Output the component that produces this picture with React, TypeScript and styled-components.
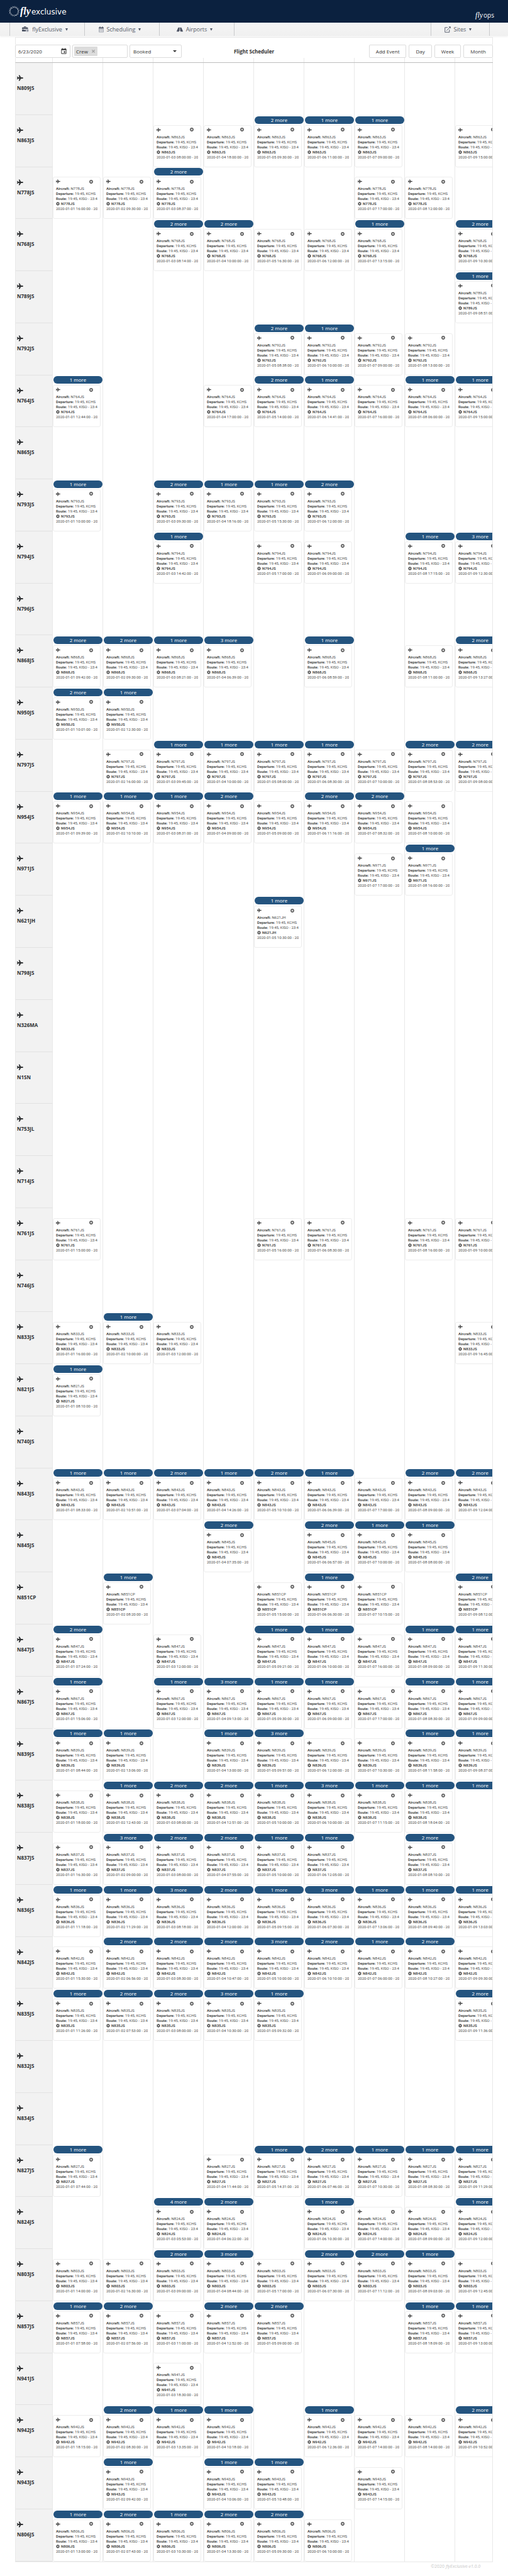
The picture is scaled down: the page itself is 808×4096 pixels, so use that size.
import React from "react";
import styled, { createGlobalStyle, css } from "styled-components";
import { FaCog, FaPlane, FaPlusCircle, FaRoad, FaTimes } from "react-icons/fa";
import { MdEvent } from "react-icons/md";

/* One line per aircraft: "day time" entries, "+n" for hidden events, "-" when no card is shown. */
const FLEET: [string, string][] = [
  ["N809JS", ""],
  ["N863JS", "3 08:00,4 18:00,5 09:30 +2,6 11:00 +1,7 09:00 +1,9 15:00"],
  ["N778JS", "1 16:00,2 09:30,3 08:37 +2,7 17:00,8 12:00"],
  ["N768JS", "3 08:14 +2,4 10:00 +2,5 16:30,6 12:00,7 13:15 +1,9 10:30 +2"],
  ["N789JS", "9 08:51 +1"],
  ["N792JS", "5 08:38 +2,6 10:00 +1,7 09:00,8 13:00"],
  ["N764JS", "1 12:44 +1,4 17:00,5 14:00 +2,6 14:41 +1,7 16:00,8 06:00 +1,9 15:00 +1"],
  ["N865JS", ""],
  ["N793JS", "1 10:00 +1,3 09:30 +2,4 18:16 +1,5 15:30 +1,6 12:00 +2"],
  ["N794JS", "3 14:42 +1,5 17:00,6 09:00,8 17:15 +1,9 12:30 +3"],
  ["N796JS", ""],
  ["N868JS", "1 09:42 +2,2 09:30 +2,3 08:21 +1,4 06:39 +3,6 08:59 +1,8 11:00,9 13:27 +2"],
  ["N950JS", "1 10:01 +2,2 12:30 +1"],
  ["N797JS", "2 16:00,3 09:45 +1,4 10:00 +1,5 08:00 +1,6 08:30 +1,7 10:00,8 08:53 +2,9 08:00 +2"],
  ["N954JS", "1 09:39 +1,2 10:10 +1,3 08:31 +1,4 09:00 +2,5 09:00,6 11:16 +2,7 08:32 +2,8 10:00"],
  ["N971JS", "7 17:00,8 16:00 +1"],
  ["N621JH", "5 10:30 +1"],
  ["N798JS", ""],
  ["N326MA", ""],
  ["N1SN", ""],
  ["N753JL", ""],
  ["N714JS", ""],
  ["N761JS", "1 15:00,5 16:00,6 08:30,8 16:00,9 10:00"],
  ["N746JS", ""],
  ["N833JS", "1 16:00,2 10:00 +1,3 12:00,9 16:45"],
  ["N821JS", "1 08:10 +1"],
  ["N740JS", ""],
  ["N843JS", "1 08:33 +1,2 10:51 +1,3 07:04 +2,4 14:26 +1,5 10:10 +2,6 06:39 +1,7 17:00,8 09:00 +2,9 12:04 +2"],
  ["N845JS", "4 07:35 +2,6 06:57 +2,7 10:00 +1,8 08:00 +1"],
  ["N851CP", "2 08:20 +1,5 15:00,6 06:30 +1,7 10:15,9 08:12 +2"],
  ["N847JS", "1 07:24 +2,3 12:00,5 09:21 +1,6 10:00 +1,7 16:00,8 09:00 +1,9 11:30 +1"],
  ["N867JS", "1 15:06 +1,3 12:00 +1,4 09:13 +3,5 09:30 +1,6 09:00 +1,7 17:00,8 08:30 +1,9 09:00 +1"],
  ["N839JS", "1 08:44 +1,2 13:06 +1,4 13:00 +1,5 09:51 +3,6 12:00,7 10:30,8 11:58 +1,9 08:37 +1"],
  ["N838JS", "1 18:00,2 12:43 +1,3 08:00 +2,4 12:51 +2,5 10:00 +1,6 10:00 +3,7 11:15 +1,8 18:04 +1,9 - +1"],
  ["N837JS", "1 16:30,2 09:00 +3,3 08:00 +2,4 07:55 +2,5 10:00 +1,6 12:05 +1,8 08:10 +2"],
  ["N836JS", "1 11:18 +1,2 11:29 +1,3 08:18 +3,4 12:00 +2,5 09:15 +1,6 07:30 +3,7 13:06 +1,8 09:40 +1,9 13:03 +1"],
  ["N842JS", "1 15:30,2 06:56 +2,3 08:30 +2,4 10:47 +2,5 10:00 +3,6 10:10 +2,7 06:00 +1,8 10:27 +2,9 09:30"],
  ["N835JS", "1 11:26 +1,2 07:53 +2,3 08:00 +2,4 10:30 +3,5 09:32 +1,9 11:36 +2"],
  ["N832JS", ""],
  ["N834JS", ""],
  ["N827JS", "1 07:44 +1,4 11:44,5 14:31 +1,6 07:46 +2,7 10:30 +1,8 08:30 +1,9 11:29 +1"],
  ["N824JS", "3 05:53 +4,4 06:22 +2,6 10:30 +1,7 14:00,8 09:00,9 12:00 +1"],
  ["N803JS", "1 14:00,2 16:30,3 09:00 +2,4 08:44 +3,5 17:00,6 07:30 +2,7 11:12 +2,8 09:03 +1,9 12:45"],
  ["N857JS", "1 07:58 +1,2 07:56 +2,3 11:00,4 12:52 +2,5 09:00 +2,8 18:09 +1,9 13:00 +1"],
  ["N941JS", "3 18:30"],
  ["N942JS", "1 18:15,2 08:30 +2,3 13:35 +1,4 10:18 +1,6 12:36 +1,7 14:00,8 14:00,9 10:52 +2"],
  ["N943JS", "2 09:42 +1,4 10:06 +1,5 10:48 +1,7 14:15"],
  ["N806JS", "1 13:00 +1,2 07:43 +2,3 10:30 +1,4 13:30 +2,5 09:30 +2,6 10:00"],
];

const DAYS = [1, 2, 3, 4, 5, 6, 7, 8, 9];
const LINE = "#e9e9e9";

const GlobalStyle = createGlobalStyle`
  *, *::before, *::after { box-sizing: border-box; }
  body { margin: 0; background: #fff; }
  body, button, input, select { font-family: "Open Sans", "Noto Sans", sans-serif; }
  button, input, select { margin: 0; padding: 0; border: 0; background: none; color: inherit; font-size: inherit; }
  svg { display: block; flex: none; }
`;

const Page = styled.div`
  display: flex;
  flex-direction: column;
  min-height: 100vh;
  color: #333;
  font-size: 8px;
`;

const TopBar = styled.header`
  display: flex;
  align-items: center;
  justify-content: space-between;
  height: 36px;
  padding: 0 22px 0 14px;
  background: #0b213f;
  color: #fff;
`;

const Brand = styled.a`
  display: flex;
  align-items: center;
  color: inherit;
  text-decoration: none;
`;

const BrandText = styled.span<{ $small?: boolean }>`
  margin: ${(p) => (p.$small ? "12px 0 0" : "0 0 0 1px")};
  font-family: ${(p) => (p.$small ? '"Open Sans"' : '"DejaVu Sans"')}, sans-serif;
  font-size: ${(p) => (p.$small ? 10 : 12)}px;
  line-height: 18px;

  em {
    margin-right: 1px;
    font: italic ${(p) => (p.$small ? "400 12px" : "700 16px")}/18px "Liberation Serif", serif;
  }
`;

const Nav = styled.nav`
  display: flex;
  justify-content: space-between;
  height: 21px;
  padding: 0 29px 0 15px;
  background: linear-gradient(#f5f5f5, #f0f0f0);
  box-shadow: 0 1px 3px rgba(0, 0, 0, 0.08);
`;

const NavGroup = styled.div`
  display: flex;
  border-left: 1px solid #c9cacc;
`;

const NavItem = styled.button<{ $narrow?: boolean }>`
  display: flex;
  align-items: center;
  justify-content: center;
  gap: 5px;
  width: ${(p) => (p.$narrow ? 93 : 119)}px;
  padding-right: 7px;
  border-right: 1px solid #c9cacc;
  color: #555b68;
  font-size: 9px;
  line-height: 12px;
`;

const Caret = styled.span`
  border: solid transparent;
  border-width: 4px 2px 0;
  border-top-color: #4f5666;
`;

const Board = styled.main`
  display: flex;
  flex: 1 0 auto;
  flex-direction: column;
  margin: 2px 24px 0;
`;

const BoardTop = styled.div`
  height: 12px;
  border: 1px solid ${LINE};
  border-bottom: 0;
`;

const Toolbar = styled.div`
  display: grid;
  grid-template-columns: 1fr auto 1fr;
  align-items: center;
  height: 21px;
`;

const Tools = styled.div<{ $end?: boolean }>`
  display: flex;
  gap: ${(p) => (p.$end ? 4 : 3)}px;
  justify-content: ${(p) => (p.$end ? "flex-end" : "flex-start")};
`;

const box = css`
  display: flex;
  align-items: center;
  height: 21px;
  border: 1px solid #dcdcdc;
  border-radius: 2px;
  background: #fff;
`;

const Field = styled.label`
  ${box}
  justify-content: space-between;
  width: 88px;
  padding: 0 4px;

  input {
    flex: 1;
    min-width: 0;
  }
`;

const TagField = styled(Field)`
  gap: 3px;
  padding: 0 2px;
`;

const Tag = styled.span`
  display: flex;
  align-items: center;
  gap: 5px;
  height: 15px;
  padding: 0 3px;
  border-radius: 1px;
  background: #dcdcdc;

  button {
    color: #a3a3a3;
  }
`;

const SelectField = styled(Field)`
  width: 83px;
  padding: 0 7px 0 5px;

  select {
    flex: 1;
    appearance: none;
  }
`;

const SmallCaret = styled(Caret)`
  border-width: 3px 3px 0;
  border-top-color: #333;
`;

const Title = styled.h1`
  margin: 0;
  font-size: 8px;
  font-weight: 700;
`;

const ViewButton = styled.button`
  ${box}
  padding: 0 10px;
`;

const columns = css`
  display: grid;
  grid-template-columns: 59px repeat(8, 4fr) 3fr;
`;

const HeadStrip = styled.div`
  ${columns}
  height: 8px;
  border-left: 1px solid ${LINE};
  border-bottom: 1px solid #bdbdbd;

  span {
    border-right: 1px solid ${LINE};
  }
`;

const Rows = styled.div`
  display: flex;
  flex: 1 0 auto;
  flex-direction: column;
  border-left: 1px solid ${LINE};
  border-bottom: 1px solid ${LINE};
`;

const Row = styled.div`
  ${columns}
  flex: 1 0 82px;
`;

const Resource = styled.div`
  display: flex;
  flex-direction: column;
  gap: 5px;
  padding: 19px 0 0 2px;
  border-right: 1px solid ${LINE};
  border-bottom: 1px solid #e2e2e2;
  background: #f2f2f2;
  color: #2f3133;
  font-size: 8px;
  font-weight: 700;
  line-height: 12px;
`;

const Cell = styled.div`
  display: flex;
  min-width: 0;
  overflow: hidden;
  border-right: 1px solid ${LINE};
`;

const Stack = styled.div<{ $cut: boolean }>`
  display: flex;
  flex: none;
  flex-direction: column;
  justify-content: flex-end;
  gap: 2px;
  width: ${(p) => (p.$cut ? "133%" : "100%")};
  padding-top: 1px;
`;

const More = styled.button`
  height: 12px;
  margin: 0 0 0 1px;
  border-radius: 6px;
  background: #24547f;
  color: #fff;
  font-size: 8px;
  line-height: 12px;
`;

const Blank = styled.div`
  height: 67px;
`;

const Card = styled.article`
  height: 67px;
  margin-right: 3px;
  padding: 3px 4px;
  border: 1px solid #ededed;
  border-radius: 3px;
  background: #fff;
  color: #4d4d4d;
  font-family: Roboto, sans-serif;
  font-size: 6px;
  line-height: 8px;
`;

const CardHead = styled.div`
  display: flex;
  align-items: center;
  justify-content: space-between;
  height: 7px;
  margin-bottom: 4px;
  padding-right: 7px;
`;

const Line = styled.div`
  height: 8px;
  overflow: hidden;
  white-space: nowrap;

  svg {
    display: inline-block;
    margin-right: 2px;
    vertical-align: -1px;
  }
`;

const Footer = styled.footer`
  height: 22px;
  padding: 2px 44px 0;
  color: #c8c8c8;
  font-size: 7px;
  line-height: 10px;
  text-align: right;
`;

const Swirl = () => (
  <svg width="17" height="18" viewBox="-14 -14 28 28" fill="#fff" aria-hidden="true">
    {Array.from({ length: 15 }, (_, i) => (
      <path key={i} transform={`rotate(${i * 24})`} d="M-6 -13.6 Q-1.500 -12.600 3.400 -8.600 Q-2.500 -10.400 -6 -13.600Z" />
    ))}
  </svg>
);

const BriefcaseClock = () => (
  <svg width="11" height="9" viewBox="0 0 22 18" aria-hidden="true">
    <path fill="#4f5666" d="M6 3V1.500Q6 0 7.500 0h4Q13 0 13 1.500V3h4q2 0 2 2v3H0V5q0-2 2-2ZM8 3h3V2H8ZM0 9.500h7v1.500h4V9.500h2.500Q11 12 12 16H1.500Q0 16 0 14.500Z" />
    <circle cx="17" cy="13" r="4.800" fill="#b3b6bf" />
    <path d="M17 10.500v3h2" fill="none" stroke="#4f5666" strokeWidth="1.200" />
  </svg>
);

const CalendarGrid = () => (
  <svg width="8" height="10" viewBox="0 0 16 19" aria-hidden="true">
    <path fill="#adb1ba" d="M0 7h16v10q0 1.500-1.500 1.500h-13Q0 18.500 0 17Z" />
    <path stroke="#f2f2f2" strokeWidth="1.200" d="M2 11h12M2 14.500h12M5.500 8.500v9M10.500 8.500v9" />
    <path fill="#4f5666" d="M0 6V4q0-1.500 1.500-1.500H3V0h2.500v2.500h5V0H13v2.500h1.500Q16 2.500 16 4v2Z" />
  </svg>
);

const OpenSite = () => (
  <svg width="10" height="10" viewBox="0 0 20 20" fill="none" stroke="#4f5666" strokeWidth="1.800" aria-hidden="true">
    <path d="M10 3.500H1.500v15h14V10M6.500 13.500 17 3" />
    <path d="M13 .5h6.500V7Z" fill="#4f5666" stroke="none" />
  </svg>
);

type Entry = { time: string; more?: string };

function parse(line: string): Record<number, Entry> {
  const out: Record<number, Entry> = {};
  line.split(",").filter(Boolean).forEach((part) => {
    const [day, time, more] = part.split(" ");
    out[Number(day)] = { time, more: more?.slice(1) };
  });
  return out;
}

function FlightCard({ tail, day, time }: { tail: string; day: number; time: string }) {
  return (
    <Card>
      <CardHead>
        <FaPlane size={7} />
        <button aria-label={`Add to ${tail}`}>
          <FaPlusCircle size={6} />
        </button>
      </CardHead>
      <Line><b>Aircraft:</b> {tail}</Line>
      <Line><b>Departure:</b> 19:45, KCHS</Line>
      <Line><b>Route:</b> 19:45, KISO - 23:45</Line>
      <Line><FaCog size={6} /><b>{tail}</b></Line>
      <Line>{`2020-01-0${day} ${time}:00 - 2020`}</Line>
    </Card>
  );
}

function FleetRow({ tail, line }: { tail: string; line: string }) {
  const entries = parse(line);
  return (
    <Row role="row">
      <Resource role="rowheader">
        <FaPlane size={10} />
        {tail}
      </Resource>
      {DAYS.map((day) => {
        const entry = entries[day];
        return (
          <Cell key={day} role="cell">
            {entry && (
              <Stack $cut={day === 9}>
                {entry.more && <More>{entry.more} more</More>}
                {entry.time === "-" ? <Blank /> : <FlightCard tail={tail} day={day} time={entry.time} />}
              </Stack>
            )}
          </Cell>
        );
      })}
    </Row>
  );
}

export default function App() {
  return (
    <Page>
      <GlobalStyle />
      <TopBar>
        <Brand href="#">
          <Swirl />
          <BrandText><em>fly</em>exclusive</BrandText>
        </Brand>
        <Brand href="#">
          <BrandText $small><em>fly</em>ops</BrandText>
        </Brand>
      </TopBar>
      <Nav>
        <NavGroup>
          <NavItem><BriefcaseClock />flyExclusive<Caret /></NavItem>
          <NavItem><CalendarGrid />Scheduling<Caret /></NavItem>
          <NavItem><FaRoad size={10} color="#4f5666" />Airports<Caret /></NavItem>
        </NavGroup>
        <NavGroup>
          <NavItem $narrow><OpenSite />Sites<Caret /></NavItem>
        </NavGroup>
      </Nav>
      <Board>
        <BoardTop />
        <Toolbar>
          <Tools>
            <Field>
              <input type="text" aria-label="Date" defaultValue="6/23/2020" />
              <MdEvent size={11} />
            </Field>
            <TagField>
              <Tag>Crew<button aria-label="Remove Crew"><FaTimes size={7} /></button></Tag>
              <input type="text" aria-label="Filter" />
            </TagField>
            <SelectField>
              <select aria-label="Status" defaultValue="Booked">
                <option>Booked</option>
              </select>
              <SmallCaret />
            </SelectField>
          </Tools>
          <Title>Flight Scheduler</Title>
          <Tools $end>
            <ViewButton>Add Event</ViewButton>
            <ViewButton>Day</ViewButton>
            <ViewButton>Week</ViewButton>
            <ViewButton>Month</ViewButton>
          </Tools>
        </Toolbar>
        <HeadStrip>
          <span />
          {DAYS.map((day) => <span key={day} />)}
        </HeadStrip>
        <Rows role="table" aria-label="Flights by aircraft">
          {FLEET.map(([tail, line]) => <FleetRow key={tail} tail={tail} line={line} />)}
        </Rows>
      </Board>
      <Footer>©2020 <i>flyExclusive-v1.0.0</i></Footer>
    </Page>
  );
}
